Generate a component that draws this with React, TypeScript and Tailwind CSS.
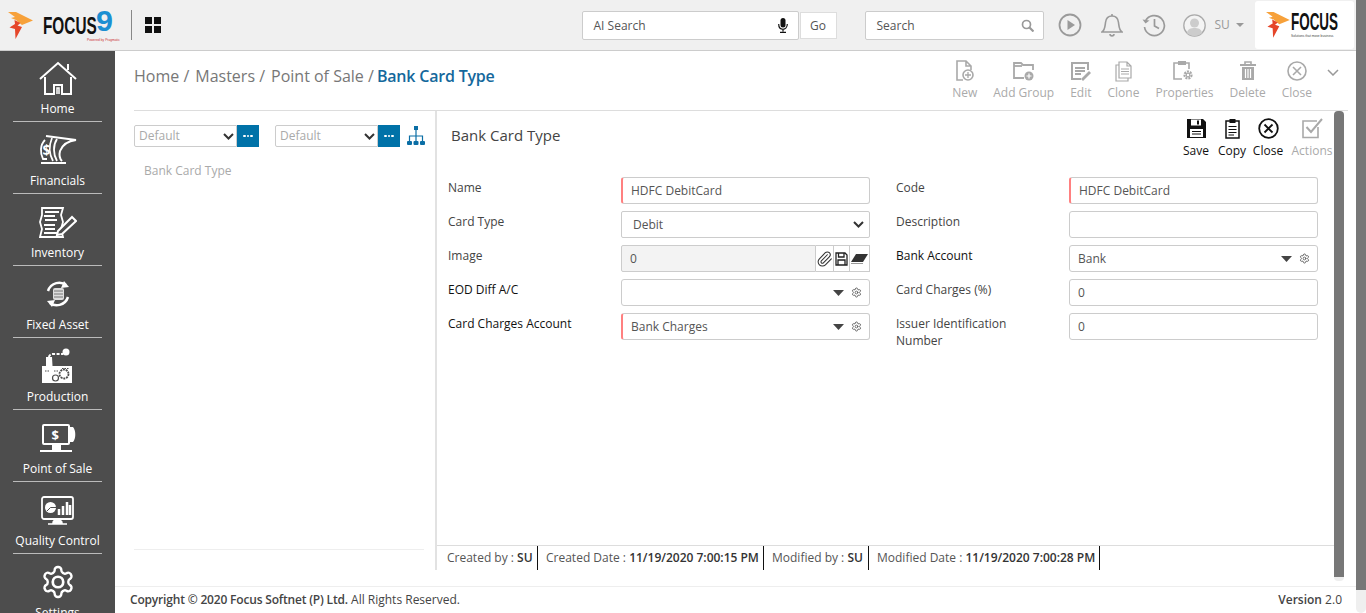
import React from "react";
import { Paperclip, Settings } from "lucide-react";

const Flame = ({ x = 0, y = 0, s = 1 }: { x?: number; y?: number; s?: number }) => (
  <g transform={`translate(${x} ${y}) scale(${s})`}>
    <path d="M0 0 L8 0 L25 8.500 L14 13 L8 8 L3 6 L7 5 Z" fill="#f7a13a" />
    <path d="M6.500 8 L12.500 11 L9.500 13.500 L14 15 L7.500 27 L7 17 L1.500 15.500 L7 12 Z" fill="#e5462a" />
  </g>
);

const SideIcons: Record<string, React.ReactNode> = {
  Home: (
    <svg width="38" height="35" viewBox="0 0 38 35" fill="none" stroke="#fff" strokeWidth="2">
      <path d="M1 18 L19 2 L37 18" />
      <path d="M29 9 V3" />
      <path d="M6 16 V33 H15 V24 H23 V33 H32 V16" />
      <path d="M18 33 V27 H20 V33" strokeWidth="1.500" />
    </svg>
  ),
  Financials: (
    <svg width="38" height="30" viewBox="0 0 38 30" fill="none" stroke="#fff" strokeWidth="1.800">
      <path d="M2 28 H27" strokeWidth="2" />
      <path d="M6 5 C1 10 1 18 4 24 H8" />
      <path d="M7 1 L37 5 C28 6 23 11 21 16 C20 20 21 24 23 26" strokeWidth="2" />
      <path d="M13 3 C10 10 10 19 14 26" />
      <path d="M18 4 C14 10 14 19 18 26" />
      <text x="3.500" y="20" fontSize="14" fontWeight="700" fill="#fff" stroke="none" fontFamily="Open Sans, sans-serif">$</text>
    </svg>
  ),
  Inventory: (
    <svg width="38" height="31" viewBox="0 0 38 31" fill="none" stroke="#fff" strokeWidth="1.800">
      <path d="M3 1 H24 L22 8 L24 15 L22 22 L24 30 H1 L3 22 L1 15 L3 8 Z" />
      <path d="M6 5 H20 M5 9 H16 M6 13 H18 M5 18 H16 M6 22 H16 M5 26 H20" strokeWidth="2" />
      <path d="M19 24 L33 10 L37 14 L23 27 L18 28 Z" fill="#4d4d4d" strokeWidth="2" />
    </svg>
  ),
  "Fixed Asset": (
    <svg width="26" height="28" viewBox="0 0 26 28" fill="none" stroke="#fff" strokeWidth="2.500">
      <path d="M3 11 C6 2 16 1 21 5" />
      <path d="M19 1 L24 7 L16 8 Z" fill="#fff" stroke="none" />
      <path d="M23 17 C20 26 10 27 5 23" />
      <path d="M7 27 L2 21 L10 20 Z" fill="#fff" stroke="none" />
      <rect x="8" y="8" width="11" height="12" rx="2" fill="#ddd" stroke="none" />
      <path d="M9 11 H18 M9 14 H18 M9 17 H18" stroke="#777" strokeWidth="1" />
    </svg>
  ),
  Production: (
    <svg width="32" height="36" viewBox="0 0 32 36" fill="none">
      <circle cx="24" cy="4" r="3.500" fill="#fff" />
      <path d="M7 9 C7 7 9 6 11 6 H21" stroke="#fff" strokeWidth="2" strokeDasharray="3 1.500" />
      <path d="M4 9 H10 L10.500 18 H30 V35 H0 V18 H4 Z" fill="#fff" />
      <circle cx="22" cy="26" r="4.500" fill="#fff" stroke="#4d4d4d" strokeWidth="1.800" strokeDasharray="2 0.800" />
      <circle cx="13.500" cy="30" r="3" fill="#fff" stroke="#4d4d4d" strokeWidth="1.200" />
      <path d="M3 23 H8 M12 23 H16 M20 20.500 H27" stroke="#4d4d4d" strokeWidth="1.200" strokeDasharray="1.500 1" />
    </svg>
  ),
  "Point of Sale": (
    <svg width="38" height="28" viewBox="0 0 38 28" fill="none" stroke="#fff">
      <rect x="4" y="1" width="26" height="19" rx="1" strokeWidth="2" />
      <path d="M31 3 H34 C37 6 37 15 34 18 H31 Z" fill="#fff" stroke="none" />
      <path d="M14 21 H21 V25 H14 Z M1 27 H33" fill="#fff" strokeWidth="2" />
      <text x="12.500" y="16" fontSize="13" fontWeight="700" fill="#fff" stroke="none" fontFamily="Open Sans, sans-serif">$</text>
    </svg>
  ),
  "Quality Control": (
    <svg width="33" height="29" viewBox="0 0 33 29" fill="none" stroke="#fff">
      <rect x="1" y="1" width="31" height="22" rx="2" strokeWidth="1.800" />
      <path d="M12 27 C12 25 14 24 16 24 C19 24 21 25 21 27 Z M7 28 H26" fill="#fff" strokeWidth="1.500" />
      <circle cx="9.500" cy="11.500" r="5.500" fill="#fff" stroke="none" />
      <path d="M9.500 11.500 L15 11.500 M9.500 11.500 L6 15" stroke="#4d4d4d" strokeWidth="1" />
      <path d="M18 19 V13 M22 19 V10 M26 19 V6 M29 19 V9" strokeWidth="2.500" />
    </svg>
  ),
  Settings: (
    <svg width="36" height="36" viewBox="0 0 24 24" fill="none" stroke="#fff" strokeWidth="1.600" strokeLinejoin="round">
      <path d="M12.220 2h-.44a2 2 0 0 0-2 2v.18a2 2 0 0 1-1 1.730l-.43.250a2 2 0 0 1-2 0l-.15-.080a2 2 0 0 0-2.730.730l-.22.380a2 2 0 0 0 .730 2.730l.15.100a2 2 0 0 1 1 1.720v.510a2 2 0 0 1-1 1.740l-.15.090a2 2 0 0 0-.730 2.730l.22.380a2 2 0 0 0 2.730.730l.15-.080a2 2 0 0 1 2 0l.43.250a2 2 0 0 1 1 1.730V20a2 2 0 0 0 2 2h.44a2 2 0 0 0 2-2v-.18a2 2 0 0 1 1-1.730l.43-.250a2 2 0 0 1 2 0l.15.080a2 2 0 0 0 2.730-.730l.22-.390a2 2 0 0 0-.730-2.730l-.15-.080a2 2 0 0 1-1-1.740v-.5a2 2 0 0 1 1-1.740l.15-.090a2 2 0 0 0 .730-2.730l-.22-.380a2 2 0 0 0-2.730-.730l-.15.080a2 2 0 0 1-2 0l-.43-.250a2 2 0 0 1-1-1.730V4a2 2 0 0 0-2-2z" />
      <circle cx="12" cy="12" r="3.500" strokeWidth="1.800" />
    </svg>
  ),
};

const sideItems = ["Home", "Financials", "Inventory", "Fixed Asset", "Production", "Point of Sale", "Quality Control", "Settings"];

const g = "#a9a9a9";
const ToolIcons: Record<string, React.ReactNode> = {
  New: (
    <svg width="20" height="22" viewBox="0 0 20 22" fill="none" stroke={g} strokeWidth="1.600">
      <path d="M8 20 H2 V1 H11 L16 6 V10 M11 1 V6 H16" />
      <circle cx="13" cy="15" r="5" fill="#fff" />
      <path d="M13 12 V18 M10 15 H16" strokeWidth="1.300" />
    </svg>
  ),
  "Add Group": (
    <svg width="24" height="20" viewBox="0 0 24 20" fill="none" stroke={g} strokeWidth="1.800">
      <path d="M12 17 H2 V2 H9 L11 4 H21 V9" />
      <path d="M2 5 H10" />
      <circle cx="17" cy="15" r="4.500" fill={g} stroke="none" />
      <path d="M17 12.500 V17.500 M14.500 15 H19.500" stroke="#fff" strokeWidth="1.200" />
    </svg>
  ),
  Edit: (
    <svg width="21" height="20" viewBox="0 0 21 20" fill="none" stroke={g} strokeWidth="1.800">
      <path d="M11 18 H2 V2 H18 V9" strokeWidth="2" />
      <path d="M5 7 H15 M5 10 H15 M5 13 H11" />
      <path d="M11 18 L19 10 L21 12 L13 20 Z" fill={g} stroke="none" />
    </svg>
  ),
  Clone: (
    <svg width="17" height="21" viewBox="0 0 17 21" fill="none" stroke={g} strokeWidth="1.200">
      <path d="M4 1 H12 L16 5 V17 H4 Z M12 1 V5 H16" />
      <path d="M4 4 H1 V20 H13 V17" />
      <path d="M6 8 H14 M6 10.500 H14 M6 13 H14" />
    </svg>
  ),
  Properties: (
    <svg width="22" height="21" viewBox="0 0 22 21" fill="none" stroke={g} strokeWidth="1.600">
      <path d="M9 18 H1 V2 H5 M13 2 H16 V8" />
      <rect x="5" y="0" width="8" height="4" fill={g} stroke="none" />
      <circle cx="15" cy="14" r="3.500" strokeWidth="2.200" strokeDasharray="2 1" />
      <circle cx="15" cy="14" r="1.800" strokeWidth="1.200" />
    </svg>
  ),
  Delete: (
    <svg width="18" height="20" viewBox="0 0 18 20" fill="none" stroke={g} strokeWidth="1.600">
      <path d="M1 4 H17" strokeWidth="2" />
      <path d="M6 3 V1 H12 V3" />
      <path d="M3 6 V19 H15 V6 Z" fill={g} stroke="none" />
      <path d="M6.500 8 V17 M9 8 V17 M11.500 8 V17" stroke="#fff" strokeWidth="1.200" />
    </svg>
  ),
  Close: (
    <svg width="20" height="20" viewBox="0 0 20 20" fill="none" stroke={g} strokeWidth="1.600">
      <circle cx="10" cy="10" r="9" />
      <path d="M6 6 L14 14 M14 6 L6 14" />
    </svg>
  ),
};

const toolItems = ["New", "Add Group", "Edit", "Clone", "Properties", "Delete", "Close"];

const Chevron = () => (
  <svg width="11" height="7" viewBox="0 0 11 7" fill="none" stroke="#333" strokeWidth="2"><path d="M1 1 L5.500 5.500 L10 1" /></svg>
);

const Label = ({ children, strong }: { children: React.ReactNode; strong?: boolean }) => (
  <div className={`w-[173px] shrink-0 pt-[2px] pr-[60px] text-[12px] leading-[17px] ${strong ? "font-medium text-[#111]" : "text-[#444]"}`}>{children}</div>
);

const inputCls = "h-[27px] w-full rounded-[3px] border border-[#ccc] bg-white px-[8px] text-[12px] text-[#555] outline-none";

const Field = ({ value = "", required }: { value?: string; required?: boolean }) => (
  <input readOnly defaultValue={value} className={`${inputCls} ${required ? "border-l-2 border-l-[#ff8080]" : ""}`} />
);

const Lookup = ({ value = "", required }: { value?: string; required?: boolean }) => (
  <div className={`flex h-[27px] w-full items-center rounded-[3px] border border-[#ccc] bg-white pl-[8px] pr-[7px] ${required ? "border-l-2 border-l-[#ff8080]" : ""}`}>
    <span className="flex-1 pt-[1px] text-[12px] text-[#555]">{value}</span>
    <svg width="11" height="6" viewBox="0 0 11 6" className="mr-[7px]"><path d="M0 0 H11 L5.500 6 Z" fill="#444" /></svg>
    <Settings size={11} strokeWidth={1.800} className="text-[#555]" />
  </div>
);

const Row = ({ children }: { children: React.ReactNode }) => <div className="flex h-[28px] w-[422px] shrink-0">{children}</div>;

function Header() {
  return (
    <header className="flex h-[51px] shrink-0 items-center border-b border-[#ccc] bg-[#f0f0f0]">
      <svg width="112" height="34" viewBox="0 0 112 34" className="ml-[8px] shrink-0">
        <Flame x={0} y={4} s={1} />
        <text transform="translate(35 26) scale(0.64 1)" fontFamily="Liberation Sans, sans-serif" fontWeight="700" fontSize="24" fill="#111">FOCUS</text>
        <text transform="translate(88 23) scale(1.05 1)" fontFamily="Liberation Sans, sans-serif" fontWeight="700" fontSize="29" fill="#1b8fd2">9</text>
        <text transform="translate(79 32.500) scale(0.82 1)" fontFamily="Liberation Sans, sans-serif" fontSize="4" fill="#c33">Powered by Pragmatic</text>
      </svg>
      <div className="ml-[11px] h-[30px] w-px shrink-0 bg-[#888]" />
      <div className="ml-[13px] grid shrink-0 grid-cols-2 gap-[1.500px]">
        <div className="h-[7px] w-[7px] bg-[#111]" /><div className="h-[7px] w-[7px] bg-[#111]" />
        <div className="h-[7px] w-[7px] bg-[#111]" /><div className="h-[7px] w-[7px] bg-[#111]" />
      </div>
      <div className="ml-[421px] flex h-[29px] w-[217px] shrink-0 items-center rounded-[2px] border border-[#ccc] bg-white pl-[11px] pr-[10px]">
        <span className="flex-1 pt-[1px] text-[12px] text-[#555]">AI Search</span>
        <svg width="10" height="15" viewBox="0 0 10 15"><rect x="2.500" y="0" width="5" height="9.500" rx="2.500" fill="#111" /><path d="M0.700 6 C0.700 13 9.300 13 9.300 6 M5 11 V13.500 M2 14.300 H8" fill="none" stroke="#111" strokeWidth="1.200" /></svg>
      </div>
      <div className="ml-px flex h-[27px] w-[37px] shrink-0 items-center justify-center border border-[#ddd] bg-white pt-[1px] text-[12px] text-[#555]">Go</div>
      <div className="ml-[28px] flex h-[29px] w-[179px] shrink-0 items-center rounded-[2px] border border-[#ccc] bg-white pl-[11px] pr-[9px]">
        <span className="flex-1 pt-[1px] text-[12px] text-[#555]">Search</span>
        <svg width="13" height="13" viewBox="0 0 13 13" fill="none" stroke="#999" strokeWidth="1.700"><circle cx="5.500" cy="5.500" r="4" /><path d="M8.500 8.500 L12.500 12.500" strokeWidth="2.200" /></svg>
      </div>
      <svg width="24" height="24" viewBox="0 0 24 24" fill="none" stroke="#9a9a9a" strokeWidth="1.800" className="ml-[14px] shrink-0"><circle cx="12" cy="12" r="10.500" /><path d="M9.500 7 L17 12 L9.500 17 Z" fill="#9a9a9a" stroke="none" /></svg>
      <svg width="22" height="24" viewBox="0 0 22 24" fill="none" stroke="#9a9a9a" strokeWidth="1.600" className="ml-[19px] shrink-0"><path d="M1 19 C4 17 4 13 4.500 9.500 C5 5 8 3 11 3 C14 3 17 5 17.500 9.500 C18 13 18 17 21 19 Z" /><path d="M9 21 C9 23.500 13 23.500 13 21" /><path d="M11 1 V3" /></svg>
      <svg width="24" height="24" viewBox="0 0 24 24" fill="none" stroke="#9a9a9a" strokeWidth="1.700" className="ml-[19px] shrink-0"><path d="M3.500 8 A10 10 0 1 1 2.500 14" /><path d="M0.500 6.500 L3.500 10.500 L7.500 7.500" fill="#9a9a9a" stroke="none" /><path d="M12.500 6 V13 L17 15.500" /></svg>
      <svg width="23" height="23" viewBox="0 0 23 23" className="ml-[17px] shrink-0"><circle cx="11.500" cy="11.500" r="10.700" fill="#f4f4f4" stroke="#aaa" strokeWidth="1.300" /><circle cx="11.500" cy="9" r="4.500" fill="#ccc" /><path d="M3.800 19 C5 14.500 8 14 11.500 14 C15 14 18 14.500 19.200 19 C15 23 8 23 3.800 19 Z" fill="#ccc" /></svg>
      <span className="ml-[9px] shrink-0 text-[12px] text-[#999]">SU</span>
      <svg width="8" height="4" viewBox="0 0 8 4" className="ml-[6px] shrink-0"><path d="M0 0 H8 L4 4 Z" fill="#999" /></svg>
      <div className="ml-[11px] flex h-[48px] w-[99px] shrink-0 items-center rounded-[3px] bg-white pl-[11px]">
        <svg width="76" height="30" viewBox="0 0 76 30">
          <Flame x={0} y={2} s={0.950} />
          <text transform="translate(25 20) scale(0.56 1)" fontFamily="Liberation Sans, sans-serif" fontWeight="700" fontSize="24" fill="#111">FOCUS</text>
          <text transform="translate(25 26.500) scale(0.82 1)" fontFamily="Liberation Sans, sans-serif" fontSize="4" fill="#444">Solutions that move business</text>
        </svg>
      </div>
    </header>
  );
}

function Sidebar() {
  return (
    <nav className="w-[115px] shrink-0 overflow-hidden bg-[#4d4d4d] px-[13px]">
      {sideItems.map((name, i) => (
        <div key={name} className={`flex flex-col items-center border-b border-[#bbb] pb-[4px] ${i === 0 ? "h-[71px]" : "h-[72px]"}`}>
          <div className="flex flex-1 items-center justify-center pt-[6px]">{SideIcons[name]}</div>
          <div className="whitespace-nowrap text-[12px] leading-[17px] text-white">{name}</div>
        </div>
      ))}
    </nav>
  );
}

const DefaultSelect = () => (
  <div className="flex h-[22px] w-[125px] shrink-0">
    <div className="flex h-[22px] w-[103px] items-center rounded-l-[2px] border border-[#ccc] bg-white pl-[4px] pr-[2px] text-[12px] text-[#aaa]">
      <span className="flex-1">Default</span>
      <Chevron />
    </div>
    <div className="flex w-[22px] items-center justify-center gap-[1px] bg-[#0072a8]">
      <span className="h-[2.500px] w-[2.500px] rounded-full bg-white" />
      <span className="h-[2.500px] w-[2.500px] rounded-full bg-white" />
      <span className="h-[2.500px] w-[2.500px] rounded-full bg-white" />
    </div>
  </div>
);

function Actions() {
  return (
    <div className="flex items-start">
      <div className="flex w-[36px] flex-col items-center">
        <svg width="21" height="21" viewBox="0 0 21 21"><path d="M1 1 H17 L20 4 V20 H1 Z" fill="#111" /><rect x="5" y="1.500" width="10" height="6" fill="#fff" /><rect x="11" y="2.500" width="2" height="4" fill="#111" /><rect x="4" y="11" width="13" height="8" fill="#fff" /><path d="M6 13.500 H15 M6 16 H15" stroke="#111" /></svg>
        <span className="mt-[3px] text-[12px] leading-[17px] text-[#111]">Save</span>
      </div>
      <div className="flex w-[36px] flex-col items-center">
        <svg width="15" height="21" viewBox="0 0 15 21" fill="none"><rect x="1" y="3" width="13" height="17" stroke="#111" strokeWidth="1.500" /><rect x="4.500" y="1" width="6" height="4" fill="#111" /><path d="M3.500 8.500 H11.500 M3.500 11.500 H11.500 M3.500 14.500 H11.500 M3.500 17 H9" stroke="#111" /></svg>
        <span className="mt-[3px] text-[12px] leading-[17px] text-[#111]">Copy</span>
      </div>
      <div className="flex w-[36px] flex-col items-center">
        <svg width="21" height="21" viewBox="0 0 21 21" fill="none" stroke="#111" strokeWidth="1.800"><circle cx="10.500" cy="10.500" r="9.300" /><path d="M6.500 6.500 L14.500 14.500 M14.500 6.500 L6.500 14.500" /></svg>
        <span className="mt-[3px] text-[12px] leading-[17px] text-[#111]">Close</span>
      </div>
      <div className="ml-[5px] flex w-[42px] flex-col items-center">
        <svg width="21" height="21" viewBox="0 0 21 21" fill="none" stroke={g} strokeWidth="1.600"><path d="M16 9 V19.500 H1 V3 H15" /><path d="M4.500 9 L9 14 L20 1" strokeWidth="2" /></svg>
        <span className="mt-[3px] text-[12px] leading-[17px] text-[#aaa]">Actions</span>
      </div>
    </div>
  );
}

function Form() {
  return (
    <div className="grid grid-cols-[422px_422px] gap-x-[26px] gap-y-[6px] pl-[11px]">
      <Row><Label>Name</Label><Field value="HDFC DebitCard" required /></Row>
      <Row><Label>Code</Label><Field value="HDFC DebitCard" required /></Row>

      <Row><Label>Card Type</Label>
        <div className="flex h-[27px] w-full items-center rounded-[2px] border border-[#ccc] bg-white pl-[11px] pr-[5px] text-[12px] text-[#555]">
          <span className="flex-1 pt-[1px]">Debit</span>
          <Chevron />
        </div>
      </Row>
      <Row><Label>Description</Label><Field /></Row>

      <Row><Label>Image</Label>
        <div className="flex h-[27px] w-full">
          <div className="flex flex-1 items-center rounded-l-[2px] border border-[#ccc] bg-[#f3f3f3] pl-[8px] pt-[1px] text-[12px] text-[#555]">0</div>
          <div className="flex w-[18px] items-center justify-center border-y border-r border-[#ccc] bg-white"><Paperclip size={18} strokeWidth={1.500} className="text-[#333]" /></div>
          <div className="flex w-[16px] items-center justify-center border-y border-r border-[#ccc] bg-white">
            <svg width="13" height="14" viewBox="0 0 13 14" fill="none" stroke="#222" strokeWidth="1.300"><path d="M1 1 H10 L12 3 V13 H1 Z M3.500 1 V5 H9 V1 M3 13 V8 H10 V13" /></svg>
          </div>
          <div className="flex w-[20px] items-center justify-center border-y border-r border-[#ccc] bg-white">
            <svg width="17" height="10" viewBox="0 0 17 10"><path d="M5 0 H17 L12 8 H0 Z" fill="#333" /><path d="M0 9.500 H12" stroke="#999" /></svg>
          </div>
        </div>
      </Row>
      <Row><Label strong>Bank Account</Label><Lookup value="Bank" /></Row>

      <Row><Label strong>EOD Diff A/C</Label><Lookup /></Row>
      <Row><Label>Card Charges (%)</Label><Field value="0" /></Row>

      <Row><Label strong><span className="whitespace-nowrap">Card Charges Account</span></Label><Lookup value="Bank Charges" required /></Row>
      <Row><Label>Issuer Identification Number</Label><Field value="0" /></Row>
    </div>
  );
}

const Stat = ({ k, v, cls }: { k: string; v: string; cls: string }) => (
  <div className={`flex h-[24px] items-center whitespace-nowrap border-r border-[#111] text-[12px] text-[#555] ${cls}`}>
    {k}&nbsp;:&nbsp;<b className="font-semibold text-[#333]">{v}</b>
  </div>
);

export default function App() {
  return (
    <div className="flex h-[613px] w-[1366px] overflow-hidden bg-white [font-family:'Open_Sans',sans-serif]">
      <div className="flex w-[1356px] shrink-0 flex-col">
        <Header />
        <div className="flex min-h-0 flex-1">
          <Sidebar />
          <main className="flex min-w-0 flex-1 flex-col">
            <div className="ml-[19px] mr-[8px] flex h-[60px] shrink-0 items-start border-b border-[#ddd]">
              <div className="flex flex-1 gap-[6px] pt-[14px] text-[16px] leading-[22px] text-[#777]">
                <span>Home /</span><span>Masters /</span><span>Point of Sale /</span>
                <span className="-ml-[3px] font-semibold tracking-[-0.2px] text-[#14689c]">Bank Card Type</span>
              </div>
              <div className="flex gap-[16px] pt-[9px]">
                {toolItems.map((t) => (
                  <div key={t} className="flex flex-col items-center">
                    <div className="flex h-[22px] items-center">{ToolIcons[t]}</div>
                    <span className="mt-[2px] text-[12px] leading-[17px] text-[#aaa]">{t}</span>
                  </div>
                ))}
              </div>
              <svg width="12" height="7" viewBox="0 0 12 7" fill="none" stroke="#999" strokeWidth="1.500" className="ml-[15px] mr-[9px] mt-[18px]"><path d="M1 1 L6 6 L11 1" /></svg>
            </div>
            <div className="flex h-[475px] shrink-0 pl-[19px]">
              <div className="flex w-[301px] shrink-0 flex-col pr-[11px]">
                <div className="flex items-center gap-[16px] pt-[14px]">
                  <DefaultSelect />
                  <div className="flex items-center gap-[7px]">
                    <DefaultSelect />
                    <svg width="18" height="20" viewBox="0 0 18 20" fill="none" stroke="#0a6ea5" strokeWidth="1.200" className="shrink-0"><rect x="7" y="0" width="4" height="4" fill="#0a6ea5" stroke="none" /><path d="M9 4 V15 M2.500 15 V10 H15.500 V15" /><rect x="0" y="15" width="5" height="4" rx="1" fill="#0a6ea5" stroke="none" /><rect x="6.500" y="15" width="5" height="4" rx="1" fill="#0a6ea5" stroke="none" /><rect x="13" y="15" width="5" height="4" rx="1" fill="#0a6ea5" stroke="none" /></svg>
                  </div>
                </div>
                <div className="mt-[15px] flex-1 pl-[10px] text-[12px] leading-[17px] text-[#aaa]">Bank Card Type</div>
                <div className="mb-[36px] h-px bg-[#eee]" />
              </div>
              <div className="mb-[16px] flex w-[899px] shrink-0 flex-col border-l-2 border-[#e2e2e2]">
                <div className="flex h-[66px] shrink-0 items-start justify-between pr-[1px]">
                  <div className="pl-[14px] pt-[13px] text-[15px] leading-[22px] text-[#444]">Bank Card Type</div>
                  <div className="pt-[7px]"><Actions /></div>
                </div>
                <div className="flex-1"><Form /></div>
                <div className="flex h-[25px] shrink-0 border-t border-[#ddd] pl-[10px]">
                  <Stat k="Created by" v="SU" cls="w-[91px]" />
                  <Stat k="Created Date" v="11/19/2020 7:00:15 PM" cls="w-[226px] pl-[8px]" />
                  <Stat k="Modified by" v="SU" cls="w-[105px] pl-[8px]" />
                  <Stat k="Modified Date" v="11/19/2020 7:00:28 PM" cls="w-[231px] pl-[8px]" />
                </div>
              </div>
              <div className="flex h-[470px] w-[10px] shrink-0 flex-col overflow-hidden rounded-b-[4px] rounded-t-[4px]">
                <div className="flex-1 bg-[#777]" />
                <div className="h-[4px] bg-[#eee]" />
              </div>
            </div>
            <footer className="flex h-[27px] shrink-0 items-center justify-between border-t border-[#eee] pl-[15px] pr-[14px] text-[12px] text-[#444]">
              <div><span className="font-semibold tracking-[-0.18px]">Copyright © 2020 Focus Softnet (P) Ltd.</span> All Rights Reserved.</div>
              <div><span className="font-semibold">Version</span> 2.0</div>
            </footer>
          </main>
        </div>
      </div>
      <div className="flex h-[613px] w-[10px] shrink-0 flex-col overflow-hidden">
        <div className="h-[590px] bg-[#777]" />
        <div className="flex-1 rounded-b-[5px] bg-[#efefef]" />
      </div>
    </div>
  );
}
